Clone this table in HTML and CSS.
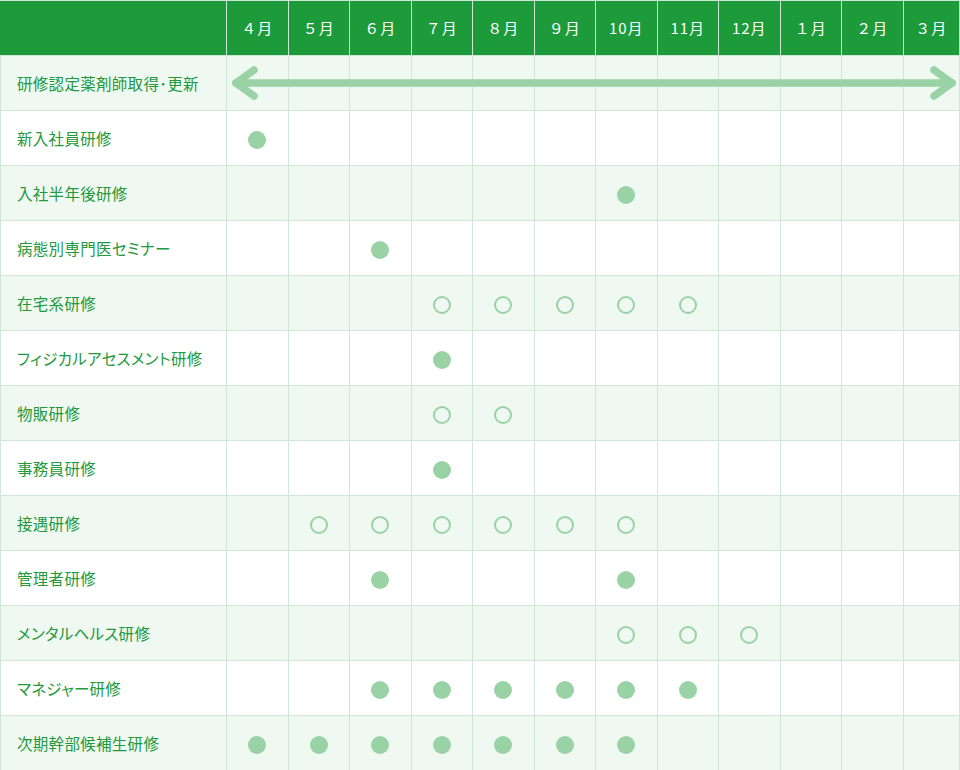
FILE: index.html
```html
<!DOCTYPE html>
<html lang="ja">
<head>
<meta charset="utf-8">
<link rel="stylesheet" href="styles.css">
</head>
<body>
<div class="wrap">
<table class="sched">
<colgroup><col class="c-label"><col class="c-m"><col class="c-m"><col class="c-m"><col class="c-m"><col class="c-m"><col class="c-m"><col class="c-m"><col class="c-m"><col class="c-m"><col class="c-m"><col class="c-m"><col class="c-last"></colgroup>
<thead>
<tr><th></th><th>４月</th><th>５月</th><th>６月</th><th>７月</th><th>８月</th><th>９月</th><th>10月</th><th>11月</th><th>12月</th><th>１月</th><th>２月</th><th>３月</th></tr>
</thead>
<tbody>
<tr class="alt"><td>研修認定薬剤師取得･更新</td><td></td><td></td><td></td><td></td><td></td><td></td><td></td><td></td><td></td><td></td><td></td><td></td></tr>
<tr><td>新入社員研修</td><td><span class="dot"></span></td><td></td><td></td><td></td><td></td><td></td><td></td><td></td><td></td><td></td><td></td><td></td></tr>
<tr class="alt"><td>入社半年後研修</td><td></td><td></td><td></td><td></td><td></td><td></td><td><span class="dot"></span></td><td></td><td></td><td></td><td></td><td></td></tr>
<tr><td>病態別専門医セミナー</td><td></td><td></td><td><span class="dot"></span></td><td></td><td></td><td></td><td></td><td></td><td></td><td></td><td></td><td></td></tr>
<tr class="alt"><td>在宅系研修</td><td></td><td></td><td></td><td><span class="ring"></span></td><td><span class="ring"></span></td><td><span class="ring"></span></td><td><span class="ring"></span></td><td><span class="ring"></span></td><td></td><td></td><td></td><td></td></tr>
<tr><td>フィジカルアセスメント研修</td><td></td><td></td><td></td><td><span class="dot"></span></td><td></td><td></td><td></td><td></td><td></td><td></td><td></td><td></td></tr>
<tr class="alt"><td>物販研修</td><td></td><td></td><td></td><td><span class="ring"></span></td><td><span class="ring"></span></td><td></td><td></td><td></td><td></td><td></td><td></td><td></td></tr>
<tr><td>事務員研修</td><td></td><td></td><td></td><td><span class="dot"></span></td><td></td><td></td><td></td><td></td><td></td><td></td><td></td><td></td></tr>
<tr class="alt"><td>接遇研修</td><td></td><td><span class="ring"></span></td><td><span class="ring"></span></td><td><span class="ring"></span></td><td><span class="ring"></span></td><td><span class="ring"></span></td><td><span class="ring"></span></td><td></td><td></td><td></td><td></td><td></td></tr>
<tr><td>管理者研修</td><td></td><td></td><td><span class="dot"></span></td><td></td><td></td><td></td><td><span class="dot"></span></td><td></td><td></td><td></td><td></td><td></td></tr>
<tr class="alt"><td>メンタルヘルス研修</td><td></td><td></td><td></td><td></td><td></td><td></td><td><span class="ring"></span></td><td><span class="ring"></span></td><td><span class="ring"></span></td><td></td><td></td><td></td></tr>
<tr><td>マネジャー研修</td><td></td><td></td><td><span class="dot"></span></td><td><span class="dot"></span></td><td><span class="dot"></span></td><td><span class="dot"></span></td><td><span class="dot"></span></td><td><span class="dot"></span></td><td></td><td></td><td></td><td></td></tr>
<tr class="alt"><td>次期幹部候補生研修</td><td><span class="dot"></span></td><td><span class="dot"></span></td><td><span class="dot"></span></td><td><span class="dot"></span></td><td><span class="dot"></span></td><td><span class="dot"></span></td><td><span class="dot"></span></td><td></td><td></td><td></td><td></td><td></td></tr>
</tbody>
</table>
<svg class="arrow" width="730" height="40" viewBox="0 0 730 40">
  <g fill="none" stroke="#99d3a5" stroke-width="7.5" stroke-linecap="round" stroke-linejoin="round">
    <line x1="6" y1="20" x2="722" y2="20"/>
    <polyline points="24,7 6,20 24,33"/>
    <polyline points="704,7 722,20 704,33"/>
  </g>
</svg>
</div>
</body>
</html>
```
FILE: styles.css
```css
html, body { margin: 0; padding: 0; background: #fff; }
.wrap { position: relative; width: 960px; }
.sched {
  width: 960px;
  table-layout: fixed;
  border-collapse: collapse;
  font-family: "Noto Sans CJK JP", "Noto Sans", sans-serif;
  line-height: 20px;
}
.c-label { width: 226px; }
.c-m { width: 61.5px; }
.sched th, .sched td {
  border: 1px solid #cfe7d6;
  padding: 0;
  text-align: center;
  vertical-align: middle;
  box-sizing: border-box;
}
.sched thead th {
  background: #1d9a3a;
  color: #fff;
  height: 55px;
  font-size: 15px;
  font-weight: 400;
  letter-spacing: 1px;
}
.sched thead th:first-child { border-left-color: #1d9a3a; }
.sched tbody td {
  height: 55px;
}
.sched tbody td:first-child {
  text-align: left;
  padding: 0 0 0 16px;
  color: #22993d;
  font-size: 15.5px;
  font-feature-settings: "palt";
  letter-spacing: 0.3px;
}
.sched tbody tr.alt td { background: #eff8f1; }
.dot, .ring {
  display: inline-block;
  width: 18px;
  height: 18px;
  border-radius: 50%;
  vertical-align: middle;
  box-sizing: border-box;
}
.dot { background: #99d3a5; }
.ring { border: 2px solid #99d3a5; }
.arrow { position: absolute; left: 230px; top: 63px; }
```
